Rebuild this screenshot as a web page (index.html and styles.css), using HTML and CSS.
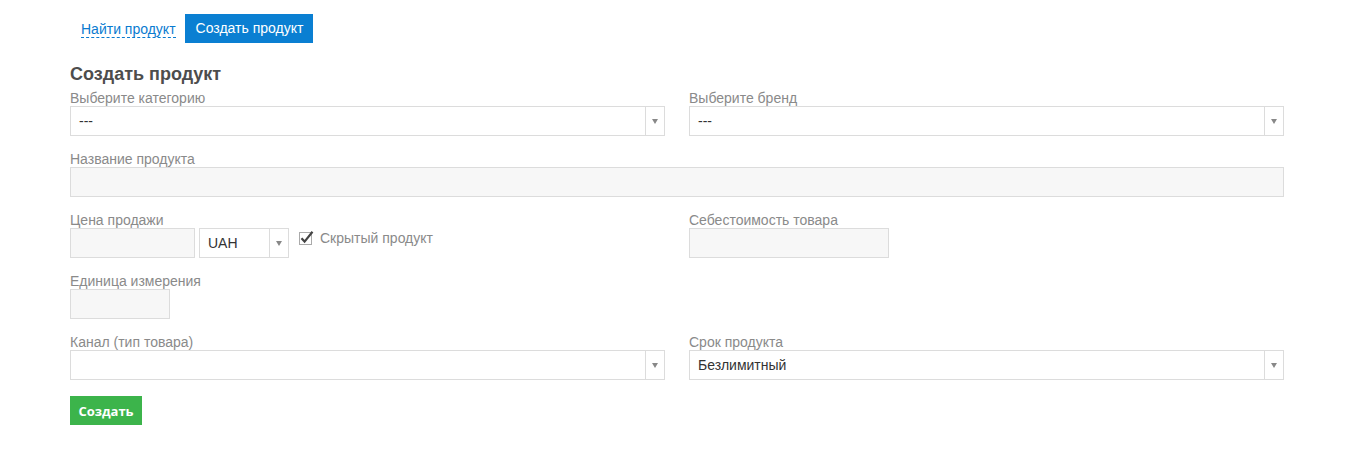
FILE: index.html
```html
<!DOCTYPE html>
<html lang="ru">
<head>
<meta charset="utf-8">
<title>Создать продукт</title>
<link rel="stylesheet" href="styles.css">
</head>
<body>
<div class="page">
  <nav class="tabs">
    <a class="tab-link" href="#">Найти продукт</a>
    <span class="tab-active">Создать продукт</span>
  </nav>
  <h2 class="title">Создать продукт</h2>
  <form class="form">
    <div class="row two">
      <div class="group">
        <div class="label">Выберите категорию</div>
        <div class="select"><span class="val">---</span><span class="arrow"></span></div>
      </div>
      <div class="group">
        <div class="label">Выберите бренд</div>
        <div class="select"><span class="val">---</span><span class="arrow"></span></div>
      </div>
    </div>
    <div class="row">
      <div class="group">
        <div class="label">Название продукта</div>
        <div class="input"></div>
      </div>
    </div>
    <div class="row two">
      <div class="group">
        <div class="label">Цена продажи</div>
        <div class="inline">
          <div class="input w125"></div>
          <div class="select w90"><span class="val">UAH</span><span class="arrow"></span></div>
          <label class="check">
            <svg width="16" height="16" viewBox="0 0 16 16" class="cbox">
              <rect x="0.5" y="2.5" width="12" height="12" fill="#fff" stroke="#aaa"/>
              <path d="M2.5 8.2 L5.6 11.6 L13.5 1.8" fill="none" stroke="#444" stroke-width="2.2"/>
            </svg>
            <span>Скрытый продукт</span>
          </label>
        </div>
      </div>
      <div class="group">
        <div class="label">Себестоимость товара</div>
        <div class="input w200"></div>
      </div>
    </div>
    <div class="row">
      <div class="group">
        <div class="label">Единица измерения</div>
        <div class="input w100"></div>
      </div>
    </div>
    <div class="row two">
      <div class="group">
        <div class="label">Канал (тип товара)</div>
        <div class="select"><span class="val"></span><span class="arrow"></span></div>
      </div>
      <div class="group">
        <div class="label">Срок продукта</div>
        <div class="select"><span class="val">Безлимитный</span><span class="arrow"></span></div>
      </div>
    </div>
    <button type="button" class="btn">Создать</button>
  </form>
</div>
</body>
</html>
```
FILE: styles.css
```css
* { box-sizing: border-box; }
body {
  margin: 0;
  font-family: "Liberation Sans", Arial, sans-serif;
  font-size: 14px;
  color: #333;
  background: #fff;
}
.page {
  width: 1214px;
  margin-left: 70px;
  padding-top: 14px;
}
.tabs {
  display: flex;
  align-items: center;
  height: 29px;
  margin-left: 11px;
}
.tab-link {
  color: #0a7bd0;
  text-decoration: none;
  border-bottom: 1px dashed #0a7bd0;
  line-height: 16px;
  margin-right: 9px;
  margin-top: 1px;
}
.tab-active {
  background: #0a7fd2;
  color: #fff;
  height: 29px;
  line-height: 29px;
  padding: 0 10px 0 11px;
}
.title {
  margin: 21px 0 0;
  font-size: 18px;
  line-height: 21px;
  font-weight: bold;
  color: #4d4d4d;
}
.form { margin-top: 6px; }
.row { display: flex; gap: 24px; margin-bottom: 16px; }
.row .group { flex: 1; min-width: 0; }
.label {
  color: #8a8a8a;
  line-height: 15px;
  height: 15px;
  font-size: 14px;
}
.select {
  display: flex;
  height: 30px;
  border: 1px solid #dcdcdc;
  background: #fff;
}
.select .val {
  flex: 1;
  padding-left: 8px;
  line-height: 28px;
  color: #333;
}
.select .arrow {
  width: 19px;
  border-left: 1px solid #dcdcdc;
  position: relative;
}
.select .arrow::after {
  content: "";
  position: absolute;
  left: 6px;
  top: 12px;
  border-left: 3.5px solid transparent;
  border-right: 3.5px solid transparent;
  border-top: 5px solid #888;
}
.input {
  height: 30px;
  border: 1px solid #dcdcdc;
  background: #f7f7f7;
}
.w125 { width: 125px; }
.w90 { width: 90px; }
.w100 { width: 100px; }
.w200 { width: 200px; }
.inline { display: flex; align-items: flex-start; gap: 4px; }
.check {
  display: flex;
  align-items: center;
  gap: 5px;
  margin-left: 6px;
  margin-top: 2px;
  color: #8a8a8a;
}
.cbox { display: block; }
.btn {
  display: block;
  width: 72px;
  height: 29px;
  border: 0;
  margin-top: 1px;
  background: #3cb44b;
  color: #fff;
  font-family: "Open Sans", sans-serif;
  font-weight: bold;
  font-size: 13px;
  padding: 0;
}
```
